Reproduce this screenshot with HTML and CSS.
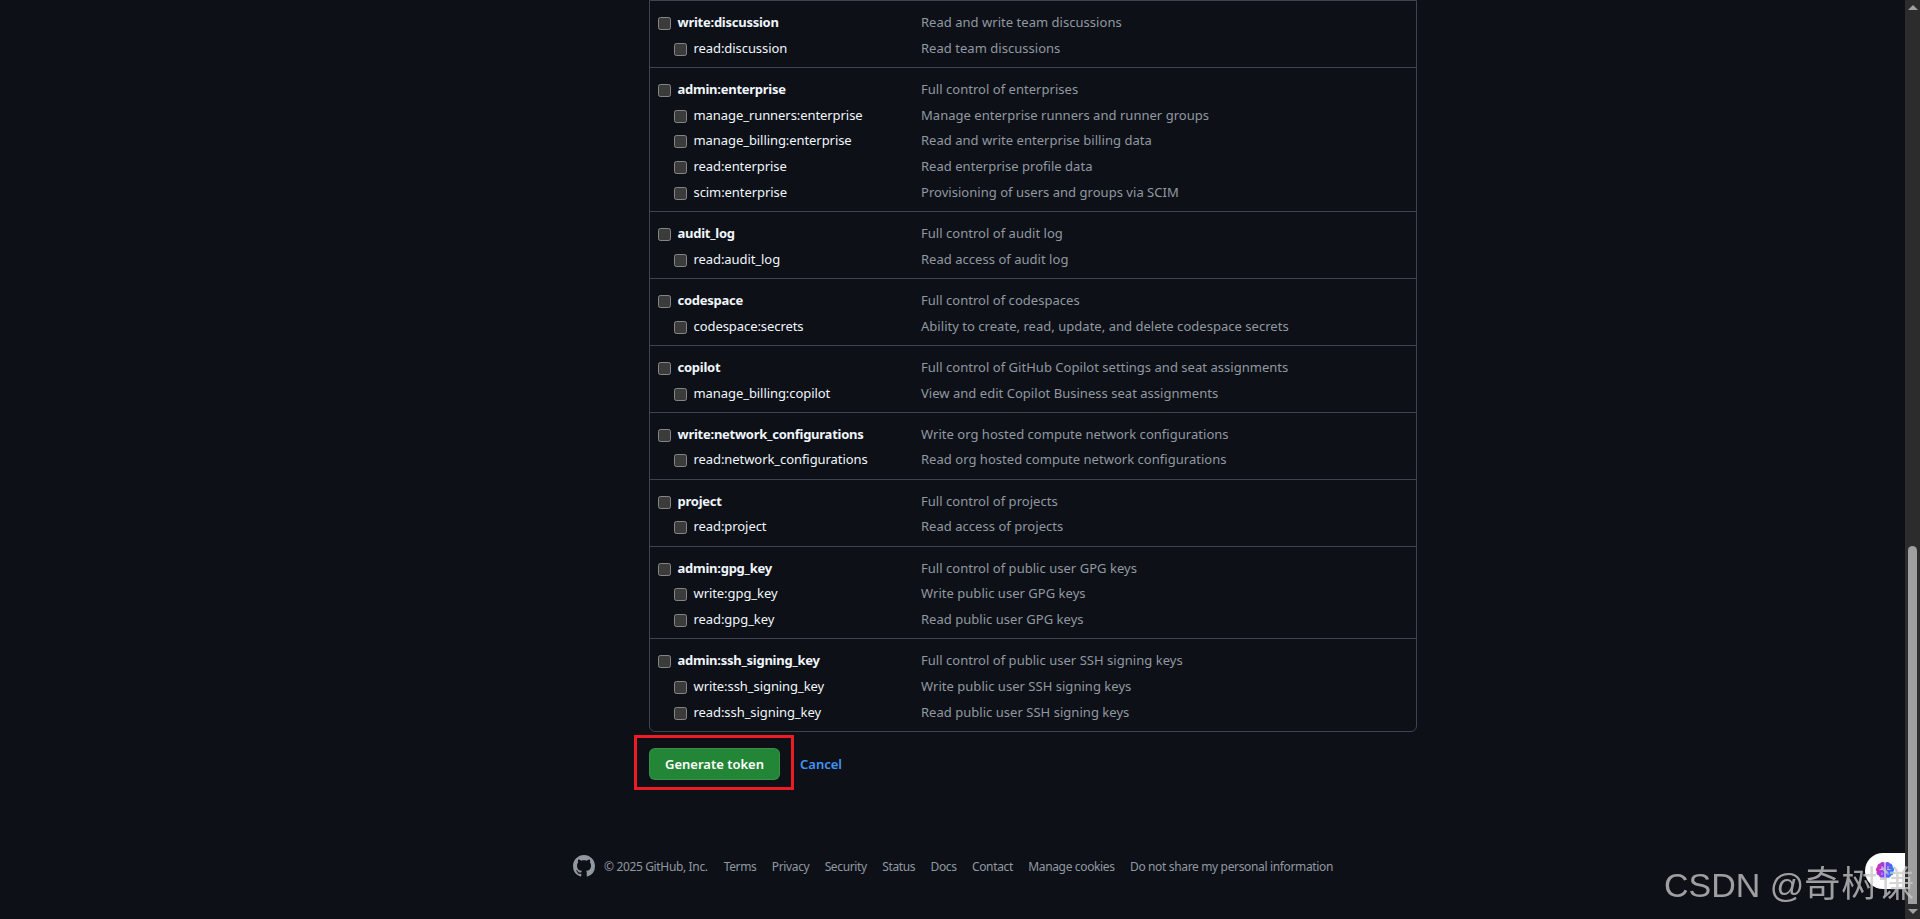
FILE: index.html
```html
<!DOCTYPE html>
<html lang="en">
<head>
<meta charset="utf-8">
<title>New personal access token</title>
<link rel="stylesheet" href="styles.css">
</head>
<body>
<div class="shell">
<main class="page">
<form class="form">
<div class="scopes">
<section class="group">
<div class="row"><label class="name parent"><input type="checkbox">write:discussion</label><span class="desc">Read and write team discussions</span></div>
<div class="row"><label class="name child"><input type="checkbox">read:discussion</label><span class="desc">Read team discussions</span></div>
</section>
<section class="group">
<div class="row"><label class="name parent"><input type="checkbox">admin:enterprise</label><span class="desc">Full control of enterprises</span></div>
<div class="row"><label class="name child"><input type="checkbox">manage_runners:enterprise</label><span class="desc">Manage enterprise runners and runner groups</span></div>
<div class="row"><label class="name child"><input type="checkbox">manage_billing:enterprise</label><span class="desc">Read and write enterprise billing data</span></div>
<div class="row"><label class="name child"><input type="checkbox">read:enterprise</label><span class="desc">Read enterprise profile data</span></div>
<div class="row"><label class="name child"><input type="checkbox">scim:enterprise</label><span class="desc">Provisioning of users and groups via SCIM</span></div>
</section>
<section class="group">
<div class="row"><label class="name parent"><input type="checkbox">audit_log</label><span class="desc">Full control of audit log</span></div>
<div class="row"><label class="name child"><input type="checkbox">read:audit_log</label><span class="desc">Read access of audit log</span></div>
</section>
<section class="group">
<div class="row"><label class="name parent"><input type="checkbox">codespace</label><span class="desc">Full control of codespaces</span></div>
<div class="row"><label class="name child"><input type="checkbox">codespace:secrets</label><span class="desc">Ability to create, read, update, and delete codespace secrets</span></div>
</section>
<section class="group">
<div class="row"><label class="name parent"><input type="checkbox">copilot</label><span class="desc">Full control of GitHub Copilot settings and seat assignments</span></div>
<div class="row"><label class="name child"><input type="checkbox">manage_billing:copilot</label><span class="desc">View and edit Copilot Business seat assignments</span></div>
</section>
<section class="group">
<div class="row"><label class="name parent"><input type="checkbox">write:network_configurations</label><span class="desc">Write org hosted compute network configurations</span></div>
<div class="row"><label class="name child"><input type="checkbox">read:network_configurations</label><span class="desc">Read org hosted compute network configurations</span></div>
</section>
<section class="group">
<div class="row"><label class="name parent"><input type="checkbox">project</label><span class="desc">Full control of projects</span></div>
<div class="row"><label class="name child"><input type="checkbox">read:project</label><span class="desc">Read access of projects</span></div>
</section>
<section class="group">
<div class="row"><label class="name parent"><input type="checkbox">admin:gpg_key</label><span class="desc">Full control of public user GPG keys</span></div>
<div class="row"><label class="name child"><input type="checkbox">write:gpg_key</label><span class="desc">Write public user GPG keys</span></div>
<div class="row"><label class="name child"><input type="checkbox">read:gpg_key</label><span class="desc">Read public user GPG keys</span></div>
</section>
<section class="group">
<div class="row"><label class="name parent"><input type="checkbox">admin:ssh_signing_key</label><span class="desc">Full control of public user SSH signing keys</span></div>
<div class="row"><label class="name child"><input type="checkbox">write:ssh_signing_key</label><span class="desc">Write public user SSH signing keys</span></div>
<div class="row"><label class="name child"><input type="checkbox">read:ssh_signing_key</label><span class="desc">Read public user SSH signing keys</span></div>
</section>
</div>
<div class="actions">
<span class="highlight"></span>
<button class="generate" type="button">Generate token</button>
<a class="cancel" href="#">Cancel</a>
</div>
</form>
<footer class="footer">
<svg class="mark" viewBox="0 0 16 16" aria-hidden="true"><path d="M8 0c4.42 0 8 3.58 8 8a8.013 8.013 0 0 1-5.45 7.59c-.4.08-.55-.17-.55-.38 0-.27.01-1.13.01-2.2 0-.75-.25-1.23-.54-1.48 1.78-.2 3.65-.88 3.65-3.95 0-.88-.31-1.59-.82-2.15.08-.2.36-1.02-.08-2.12 0 0-.67-.22-2.2.82-.64-.18-1.32-.27-2-.27-.68 0-1.36.09-2 .27-1.53-1.03-2.2-.82-2.2-.82-.44 1.1-.16 1.92-.08 2.12-.51.56-.82 1.28-.82 2.15 0 3.06 1.86 3.75 3.64 3.95-.23.2-.44.55-.51 1.07-.46.21-1.61.55-2.33-.66-.15-.24-.6-.83-1.23-.82-.67.01-.27.38.01.53.34.19.73.9.82 1.13.16.45.68 1.31 2.69.94 0 .67.01 1.3.01 1.49 0 .21-.15.45-.55.38A7.995 7.995 0 0 1 0 8c0-4.42 3.58-8 8-8Z"/></svg>
<span class="copy">© 2025 GitHub, Inc.</span>
<a href="#">Terms</a><a href="#">Privacy</a><a href="#">Security</a><a href="#">Status</a><a href="#">Docs</a><a href="#">Contact</a><a href="#">Manage cookies</a><a href="#">Do not share my personal information</a>
</footer>
</main>
<aside class="scrollbar" aria-hidden="true">
<span class="arrow up"></span>
<span class="thumb"></span>
<span class="arrow down"></span>
</aside>
</div>
<div class="bubble">
<svg class="brain" viewBox="0 0 20 20" aria-hidden="true">
<defs><linearGradient id="bg" x1="0" y1="0" x2="1" y2="0.3"><stop offset="0" stop-color="#f0309a"/><stop offset=".5" stop-color="#8f3df0"/><stop offset="1" stop-color="#2f80f5"/></linearGradient></defs>
<path fill="url(#bg)" d="M9.500 1.500C8 .4 5.800.8 5.100 2.400 3.100 2.500 1.900 4.200 2.300 5.900.700 6.800.300 9.200 1.700 10.400.900 12.300 2.100 14.300 4 14.400 4.500 16.400 6.800 17.500 8.300 16.400L9.500 18.500ZM10.500 1.500C12 .4 14.200.8 14.900 2.400 16.900 2.500 18.100 4.200 17.700 5.900 19.300 6.800 19.700 9.200 18.300 10.400 19.100 12.300 17.900 14.300 16 14.400 15.500 16.400 13.200 17.500 11.700 16.400L10.500 18.500Z"/>
<path fill="none" stroke="#fff" stroke-width=".6" d="M7 5V8M4.500 8.500H8M13 5V8M15.500 8.500H12M7 11.500V14M13 11.500V14"/>
</svg>
</div>
<div class="watermark">CSDN @<span class="cjk">奇树谦</span></div>
</body>
</html>
```

FILE: styles.css
```css
* {
  box-sizing: border-box;
}

html,
body {
  margin: 0;
  height: 919px;
  overflow: hidden;
  background: #0d1117;
  color-scheme: dark;
}

body {
  font-family: "Noto Sans", "Liberation Sans", sans-serif;
  font-size: 13px;
  color: #f0f6fc;
}

.shell {
  display: flex;
  height: 919px;
}

.page {
  flex: 1;
  display: flex;
  flex-direction: column;
  padding-left: 649px;
}

.form {
  width: 768px;
}

.scopes {
  border: 1px solid #3d444d;
  border-radius: 0 0 6px 6px;
}

.group {
  padding: 8.2px 0 6.47px;
  border-top: 1px solid #3d444d;
}

.group:first-child {
  border-top: 0;
}

.row {
  display: grid;
  grid-template-columns: 271px 1fr;
  align-items: center;
  height: 25.67px;
}

.name {
  display: flex;
  align-items: center;
  gap: 6.5px;
  color: #f0f6fc;
  white-space: nowrap;
}

.name input {
  width: 13px;
  height: 13px;
  margin: 3px 0 0;
  flex: none;
}

.parent {
  padding-left: 8px;
  font-weight: 700;
  letter-spacing: -0.25px;
}

.child {
  padding-left: 24px;
  letter-spacing: -0.07px;
}

.desc {
  color: #9198a1;
  white-space: nowrap;
  letter-spacing: 0.03px;
}

.actions {
  position: relative;
  display: flex;
  align-items: center;
  gap: 20px;
  margin-top: 16px;
}

.highlight {
  position: absolute;
  left: -15px;
  top: -13px;
  width: 160px;
  height: 55px;
  border: 3px solid #ed1c24;
}

.generate {
  width: 131px;
  height: 32px;
  padding: 0;
  border: 1px solid rgba(240, 246, 252, 0.1);
  border-radius: 6px;
  background: #238636;
  color: #fff;
  font: 600 13px "Noto Sans", "Liberation Sans", sans-serif;
}

.cancel {
  color: #4493f8;
  font-weight: 600;
  text-decoration: none;
}

.footer {
  display: flex;
  align-items: center;
  gap: 15.3px;
  margin-top: 75px;
  margin-left: -76px;
  font-size: 12px;
  letter-spacing: -0.35px;
  color: #9198a1;
  white-space: nowrap;
}

.footer a {
  color: #9198a1;
  text-decoration: none;
}

.mark {
  width: 22px;
  height: 22px;
  margin-right: -6.3px;
  fill: #9198a1;
  flex: none;
}

.copy {
  margin-right: 0.7px;
}

.scrollbar {
  flex: none;
  width: 15px;
  display: flex;
  flex-direction: column;
  align-items: center;
  padding-top: 5px;
  background: #2c2c2c;
}

.arrow {
  width: 0;
  height: 0;
  border-left: 5px solid transparent;
  border-right: 5px solid transparent;
}

.up {
  border-bottom: 5px solid #a0a0a0;
}

.down {
  border-top: 5px solid #a0a0a0;
  margin-top: 5px;
}

.thumb {
  width: 9px;
  height: 358px;
  margin-top: 536px;
  border-radius: 5px 5px 0 0;
  background: #9f9f9f;
}

.bubble {
  position: fixed;
  left: 1865px;
  top: 853px;
  width: 40px;
  height: 36px;
  display: flex;
  align-items: center;
  justify-content: center;
  border-radius: 18px 0 0 18px;
  background: #fff;
}

.brain {
  width: 20px;
  height: 20px;
}

.watermark {
  position: fixed;
  left: 1664px;
  top: 861px;
  font: 34px/40px "Liberation Sans", "Noto Sans CJK SC", sans-serif;
  color: rgba(200, 200, 200, 0.78);
  white-space: nowrap;
}

.cjk {
  font-size: 36px;
  letter-spacing: 1px;
  font-family: "Noto Sans CJK SC", sans-serif;
}
```
